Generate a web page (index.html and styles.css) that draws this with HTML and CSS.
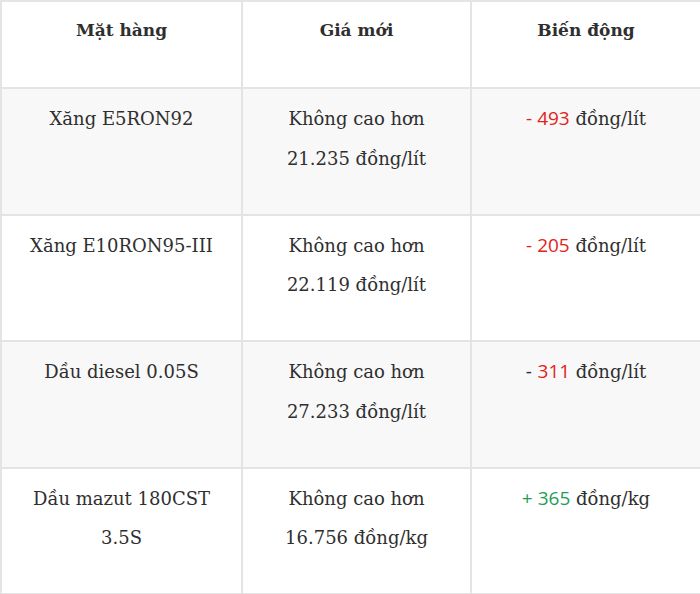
FILE: index.html
```html
<!DOCTYPE html>
<html lang="vi">
<head>
<meta charset="utf-8">
<title>Giá xăng dầu</title>
<link rel="stylesheet" href="styles.css">
</head>
<body>
<table class="price-table">
  <colgroup>
    <col class="c1"><col class="c2"><col class="c3">
  </colgroup>
  <thead>
    <tr><th>Mặt hàng</th><th>Giá mới</th><th>Biến động</th></tr>
  </thead>
  <tbody>
    <tr class="alt">
      <td>Xăng E5RON92</td>
      <td>Không cao hơn<br>21.235 đồng/lít</td>
      <td><span class="down">- 493</span> đồng/lít</td>
    </tr>
    <tr>
      <td>Xăng E10RON95-III</td>
      <td>Không cao hơn<br>22.119 đồng/lít</td>
      <td><span class="down">- 205</span> đồng/lít</td>
    </tr>
    <tr class="alt">
      <td>Dầu diesel 0.05S</td>
      <td>Không cao hơn<br>27.233 đồng/lít</td>
      <td>- <span class="down">311</span> đồng/lít</td>
    </tr>
    <tr>
      <td>Dầu mazut 180CST<br>3.5S</td>
      <td>Không cao hơn<br>16.756 đồng/kg</td>
      <td><span class="up">+ 365</span> đồng/kg</td>
    </tr>
  </tbody>
</table>
</body>
</html>
```
FILE: styles.css
```css
html, body {
  margin: 0;
  padding: 0;
  background: #fff;
}
.price-table {
  width: 700px;
  border-collapse: collapse;
  table-layout: fixed;
  font-family: "DejaVu Serif", serif;
  font-size: 18px;
  color: #2f2f2f;
}
.c1 { width: 241px; }
.c2 { width: 229px; }
.c3 { width: 230px; }
.price-table th,
.price-table td {
  border: 2px solid #e4e4e4;
  text-align: center;
  vertical-align: top;
  line-height: 39.5px;
  padding: 9px 6px 36.5px;
}
.price-table th {
  font-weight: bold;
  font-size: 17px;
}
.price-table tbody td {
  padding-top: 10px;
  padding-bottom: 35.5px;
}
.alt td {
  background: #f8f8f8;
}
.down, .up {
  font-family: "Open Sans", sans-serif;
  font-size: 19px;
}
.down { color: #e2231a; }
.up { color: #1e9e55; }
```
